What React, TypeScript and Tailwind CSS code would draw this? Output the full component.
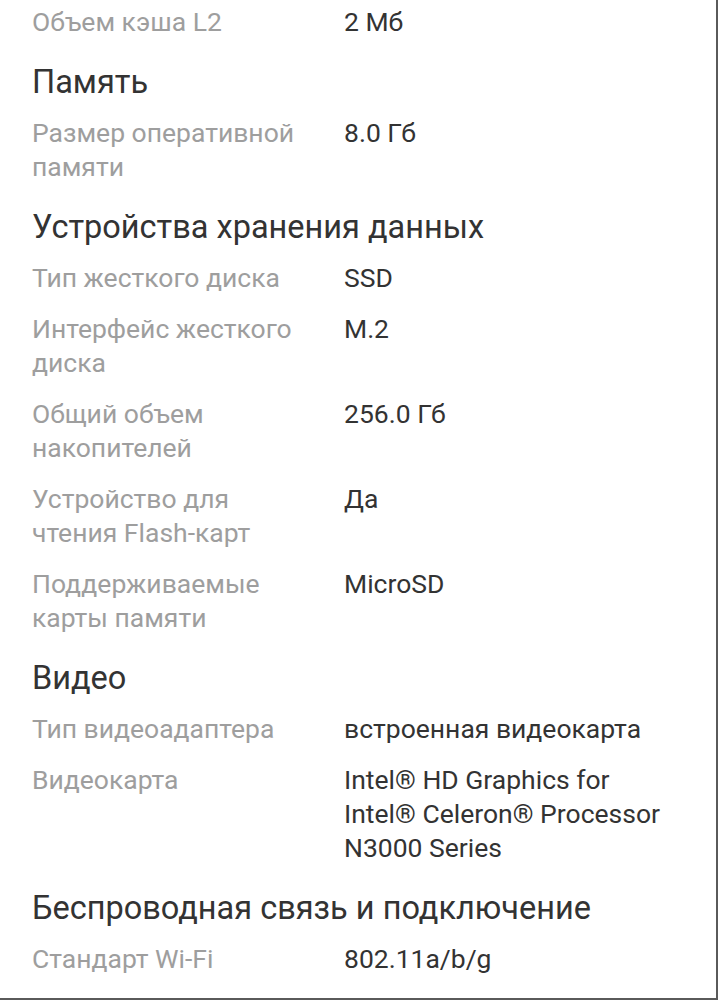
import React from "react";

type Row = { label: string; value: string };
type Section = { title?: string; rows: Row[] };

const sections: Section[] = [
  { rows: [{ label: "Объем кэша L2", value: "2 Мб" }] },
  {
    title: "Память",
    rows: [{ label: "Размер оперативной памяти", value: "8.0 Гб" }],
  },
  {
    title: "Устройства хранения данных",
    rows: [
      { label: "Тип жесткого диска", value: "SSD" },
      { label: "Интерфейс жесткого диска", value: "M.2" },
      { label: "Общий объем накопителей", value: "256.0 Гб" },
      { label: "Устройство для чтения Flash-карт", value: "Да" },
      { label: "Поддерживаемые карты памяти", value: "MicroSD" },
    ],
  },
  {
    title: "Видео",
    rows: [
      { label: "Тип видеоадаптера", value: "встроенная видеокарта" },
      {
        label: "Видеокарта",
        value: "Intel® HD Graphics for Intel® Celeron® Processor N3000 Series",
      },
    ],
  },
  {
    title: "Беспроводная связь и подключение",
    rows: [{ label: "Стандарт Wi-Fi", value: "802.11a/b/g" }],
  },
];

export default function App() {
  return (
    <div
      className="h-[1000px] w-[718px] overflow-hidden border-r-2 border-b-2 border-[#5a5a5a] bg-white pl-[32px] pt-[5px]"
      style={{ fontFamily: "Roboto, 'Noto Sans', sans-serif" }}
    >
      {sections.map((s, i) => (
        <div key={i} className={i > 0 ? "mt-[23px]" : ""}>
          {s.title && (
            <h2 className="mb-[14px] text-[32.5px] leading-[40px] text-[#333333]">
              {s.title}
            </h2>
          )}
          <div className="flex flex-col gap-[17px]">
            {s.rows.map((r) => (
              <div key={r.label} className="flex gap-[36px] text-[26.5px] leading-[34px]">
                <div className="w-[276px] shrink-0 text-[#9e9e9e]">{r.label}</div>
                <div className="w-[326px] text-[#333333]">{r.value}</div>
              </div>
            ))}
          </div>
        </div>
      ))}
    </div>
  );
}
